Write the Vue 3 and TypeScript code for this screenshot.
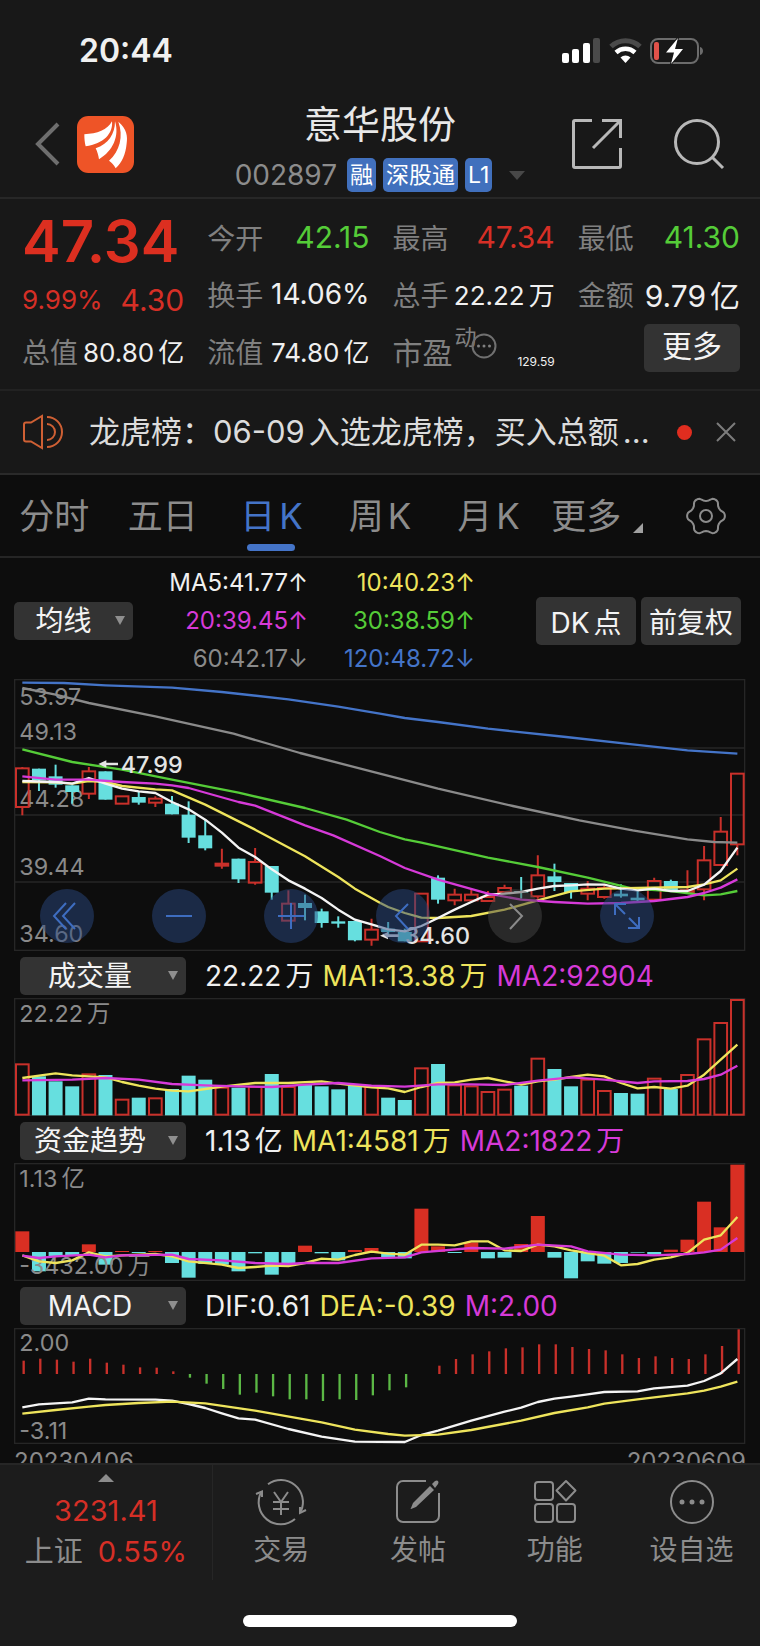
<script setup lang="ts">
import { ref } from 'vue'

type Point = [number, number]
type Candle = [kind: 'u' | 'd', high: number, top: number, bottom: number, low: number]
interface Line { color: string; points: string }

/* Chart panels share one horizontal scale: three units per pixel at full width. */
const X0 = 25
const STEP = 50
const x = (i: number): number => X0 + i * STEP * 0.9977
const line = (color: string, pts: Point[]): Line => ({
  color,
  points: pts.map(([i, y]) => `${x(i).toFixed(1)},${y}`).join(' '),
})

const WHITE = '#f4f4f4'
const YELLOW = '#eee45c'
const PINK = '#d63ad8'
const GREEN = '#55cc38'
const GRAY = '#8a8a8a'
const BLUE = '#4474c8'

const tabs = ['分时', '五日', '日K', '周K', '月K']
const activeTab = ref('日K')
const average = ref('均线')
const panelA = ref('成交量')
const panelB = ref('资金趋势')
const panelC = ref('MACD')

const averages = [
  { text: 'MA5:41.77↑', tone: 'white' },
  { text: '10:40.23↑', tone: 'yellow' },
  { text: '20:39.45↑', tone: 'pink' },
  { text: '30:38.59↑', tone: 'green' },
  { text: '60:42.17↓', tone: 'gray' },
  { text: '120:48.72↓', tone: 'blue' },
]

const priceLabels: { text: string; y: number }[] = [
  { text: '53.97', y: 95 },
  { text: '49.13', y: 198 },
  { text: '44.28', y: 400 },
  { text: '39.44', y: 603 },
  { text: '34.60', y: 805 },
]

const candles: Candle[] = [
  ['u', 280, 284, 400, 425], ['d', 285, 285, 320, 352], ['d', 273, 308, 333, 342], ['d', 335, 335, 355, 390],
  ['u', 280, 293, 360, 376], ['d', 293, 293, 378, 378], ['u', 368, 368, 390, 390], ['d', 352, 370, 387, 393],
  ['u', 368, 375, 387, 400], ['d', 367, 390, 422, 422], ['d', 383, 423, 492, 508], ['d', 437, 485, 524, 530],
  ['u', 525, 570, 576, 585], ['d', 555, 555, 617, 628], ['u', 523, 565, 627, 633], ['d', 577, 577, 657, 678],
  ['u', 650, 690, 741, 741], ['d', 663, 688, 703, 740], ['d', 705, 713, 748, 762], ['d', 728, 743, 750, 762],
  ['d', 742, 742, 800, 803], ['u', 735, 768, 798, 816], ['d', 745, 765, 775, 790], ['d', 765, 775, 803, 803],
  ['u', 658, 660, 803, 803], ['d', 605, 612, 678, 690], ['u', 645, 663, 680, 695], ['u', 645, 663, 680, 683],
  ['u', 652, 670, 682, 682], ['u', 633, 643, 655, 658], ['d', 610, 652, 657, 675], ['u', 545, 605, 668, 675],
  ['d', 570, 608, 625, 652], ['d', 628, 628, 655, 675], ['u', 622, 645, 660, 680], ['u', 635, 643, 670, 675],
  ['d', 632, 660, 668, 672], ['d', 648, 672, 680, 685], ['u', 612, 622, 678, 682], ['d', 618, 622, 652, 655],
  ['u', 590, 650, 655, 660], ['u', 517, 560, 647, 680], ['u', 430, 474, 574, 574], ['u', 300, 300, 512, 545],
]

const priceLines: Line[] = [
  line(BLUE, [[0, 27], [2.5, 28], [5, 35], [9, 42], [12, 55], [16, 77], [19, 99], [21.5, 120], [23, 133], [25, 145], [28, 165], [32.7, 190], [36.7, 212], [40, 230], [43, 240]]),
  line(GRAY, [[0, 43], [2, 63], [4, 88], [8, 128], [12.7, 180], [16.7, 238], [21.5, 300], [25, 345], [29.5, 397], [33.5, 440], [36.7, 470], [40, 497], [41.6, 505], [43, 507]]),
  line(GREEN, [[0, 227], [3, 265], [6, 288], [9, 318], [13, 357], [17, 403], [19.5, 438], [21.5, 475], [23, 497], [24, 507], [28, 552], [31, 580], [34, 612], [36.7, 645], [39, 652], [41, 665], [42, 662], [43, 652]]),
  line(YELLOW, [[0, 325], [2, 326], [3, 330], [4, 322], [5, 325], [6, 337], [8, 347], [9, 350], [11, 393], [14, 468], [17, 548], [19, 610], [20, 645], [21.5, 687], [22, 700], [23, 718], [24, 732], [25, 733], [27, 727], [29, 708], [31, 680], [33, 653], [35, 645], [37, 643], [40, 640], [41, 632], [42, 620], [43, 585]]),
  line(WHITE, [[0, 322], [2, 325], [3, 330], [4, 313], [5, 330], [6, 345], [7, 353], [8, 358], [9, 385], [10, 407], [11, 438], [12, 477], [13, 522], [14, 550], [15, 587], [16, 620], [17, 645], [18, 673], [19, 708], [20, 738], [21, 752], [22, 767], [23, 773], [24, 757], [25, 733], [26, 708], [27, 685], [28, 663], [29, 660], [30, 655], [31, 645], [32, 637], [33, 635], [34, 632], [35, 633], [36, 645], [37, 650], [38, 645], [39, 652], [40, 652], [41, 633], [42, 592], [43, 522]]),
  line(PINK, [[0, 308], [2, 318], [4, 318], [6, 325], [8, 330], [9, 335], [10, 343], [13, 385], [14, 396], [17, 455], [18.7, 485], [21.5, 547], [23, 583], [25, 618], [28, 660], [30, 678], [32, 685], [34, 690], [36, 688], [38, 682], [40, 670], [41, 658], [42, 642], [43, 617]]),
]

const volumes: number[] = [
  222, 260, 275, 290, 252, 256, 328, 324, 324, 298, 258, 270, 292, 294, 290, 253, 290, 283, 290, 299, 288, 290,
  324, 331, 234, 223, 285, 288, 305, 298, 288, 205, 238, 290, 268, 302, 310, 312, 265, 298, 254, 147, 98, 29,
]
const volumeLines: Line[] = [
  line(YELLOW, [[0, 265], [1, 258], [2, 251], [3, 257], [5, 263], [6, 277], [7, 288], [8, 297], [9, 303], [10, 305], [11, 298], [12, 291], [14, 280], [16, 280], [18, 275], [19, 282], [21, 293], [22, 296], [23, 307], [24, 292], [25, 280], [26, 278], [27, 270], [28, 265], [29, 275], [30, 285], [31, 275], [32, 270], [33, 262], [34, 255], [35, 260], [36, 280], [37, 296], [38, 292], [39, 297], [40, 288], [41, 255], [42, 210], [43, 165]]),
  line(PINK, [[0, 272], [3, 270], [5, 265], [7, 270], [9, 283], [11, 287], [13, 290], [15, 292], [17, 285], [19, 280], [21, 288], [23, 291], [25, 284], [27, 284], [29, 286], [31, 273], [33, 263], [35, 270], [37, 280], [38, 275], [40, 274], [41, 268], [42, 255], [43, 228]]),
]

const FUND_ZERO = 787
const funds: number[] = [
  725, 845, 800, 797, 764, 825, 784, 790, 784, 820, 864, 823, 825, 845, 791, 855, 820, 768, 791, 812, 781, 775,
  805, 806, 657, 770, 790, 758, 806, 804, 763, 679, 804, 866, 815, 822, 820, 789, 795, 780, 750, 636, 713, 525,
]
const fundLines: Line[] = [
  line(YELLOW, [[0, 797], [1, 815], [2, 820], [3, 812], [4, 788], [5, 800], [6, 797], [8, 793], [9, 800], [10, 815], [12, 825], [13, 835], [14, 832], [15, 828], [16, 829], [17, 820], [18, 807], [19, 810], [20, 796], [21, 786], [22, 792], [23, 795], [24, 765], [25, 765], [26, 767], [27, 755], [28, 755], [29, 782], [30, 784], [31, 765], [32, 770], [33, 782], [34, 790], [35, 798], [36, 827], [37, 823], [38, 810], [39, 803], [40, 790], [41, 750], [42, 737], [43, 682]]),
  line(PINK, [[0, 798], [1, 805], [2, 800], [4, 795], [5, 803], [6, 797], [9, 795], [10, 808], [12, 812], [14, 820], [16, 823], [17, 820], [19, 820], [21, 806], [23, 803], [24, 788], [27, 775], [29, 777], [31, 765], [33, 770], [34, 785], [36, 795], [38, 797], [40, 793], [41, 788], [42, 780], [43, 745]]),
]

const MACD_ZERO = 265
const macd: number[] = [
  225, 219, 222, 228, 219, 231, 237, 245, 246, 257, 276, 294, 310, 327, 321, 332, 341, 341, 346, 341, 343, 329,
  314, 305, 265, 240, 220, 206, 197, 188, 185, 176, 176, 184, 190, 194, 206, 217, 212, 217, 220, 206, 181, 131,
]
const macdLines: Line[] = [
  line(WHITE, [[0, 365], [1, 356], [3, 350], [4, 339], [5, 341], [8, 342], [9, 345], [10, 355], [11, 367], [12, 383], [13, 398], [14, 402], [16, 430], [18, 453], [20, 468], [23, 469], [24, 448], [25, 435], [27, 405], [29, 378], [30, 366], [31, 349], [32, 339], [33, 333], [34, 326], [35, 319], [37, 317], [38, 308], [40, 300], [41, 286], [42, 263], [43, 220]]),
  line(YELLOW, [[0, 384], [2, 373], [4, 363], [5, 358], [7, 352], [9, 348], [11, 353], [14, 375], [18, 410], [20, 432], [22, 445], [23, 450], [25, 447], [27, 433], [30, 405], [32, 382], [34, 365], [35, 354], [37, 341], [40, 323], [41, 315], [42, 303], [43, 288]]),
]

/* Six-lobed outline of the settings gear. */
const gear: string = Array.from({ length: 72 }, (_, k) => {
  const a = (k * Math.PI) / 36
  const c = Math.cos(6 * a)
  const r = 17 + 1.9 * Math.sign(c) * Math.pow(Math.abs(c), 0.6)
  return `${(20 + r * Math.cos(a)).toFixed(2)},${(20 + r * Math.sin(a)).toFixed(2)}`
}).join(' ')
</script>

<template>
  <div class="app">
    <div class="status">
      <time class="clock">20:44</time>
      <div class="signals">
        <svg class="bars" viewBox="0 0 39 26" aria-hidden="true">
          <rect x="0" y="15" width="7" height="10" rx="2" fill="#fff" />
          <rect x="10" y="11" width="7" height="14" rx="2" fill="#fff" />
          <rect x="21" y="5" width="7" height="20" rx="2" fill="#fff" />
          <rect x="31" y="0" width="7" height="25" rx="2" fill="#4a4a4a" />
        </svg>
        <svg class="wifi" viewBox="0 0 33 26" fill="none" aria-hidden="true">
          <path d="M2 8.5a21 21 0 0 1 29 0" stroke="#4a4a4a" stroke-width="5" />
          <path d="M7 14.5a14 14 0 0 1 19 0" stroke="#fff" stroke-width="4.5" />
          <path d="M11.5 19.5a7.5 7.5 0 0 1 10 0L16.500 25z" fill="#fff" />
        </svg>
        <svg class="battery" viewBox="0 0 54 28" fill="none" aria-hidden="true">
          <rect x="1" y="2" width="47" height="24" rx="7" stroke="#6c6c6c" stroke-width="2" />
          <path d="M50 10c4 1 4 7 0 8z" fill="#6c6c6c" />
          <rect x="4" y="5" width="5" height="18" rx="2" fill="#e0524a" />
          <path d="M28 1 16 15.500h8L21 27l12-15h-8z" fill="#fff" stroke="#181818" stroke-width="2" paint-order="stroke" />
        </svg>
      </div>
    </div>

    <header class="header">
      <div class="side">
        <button class="plain" aria-label="返回">
          <svg class="back" viewBox="0 0 26 44" fill="none"><path d="M23 2 3 22l20 20" stroke="#6e6e6e" stroke-width="4" /></svg>
        </button>
        <svg class="logo" viewBox="0 0 171 171" aria-hidden="true">
          <rect width="171" height="171" rx="34" fill="#ee5427" />
          <g fill="#fff">
            <path d="M22 55C60 53 92 42 105 16 109 52 80 84 26 91 23 80 22 68 22 55z" />
            <path d="M114 16C128 60 108 105 66 130 64 118 61 107 56 97 94 84 114 55 114 16z" />
            <path d="M124 17C150 38 152 62 149 82 146 115 135 140 116 157 111 147 104 140 96 134 128 106 140 60 124 17z" />
          </g>
        </svg>
      </div>
      <div class="heading">
        <h1>意华股份</h1>
        <div class="code">
          <span class="digits">002897</span>
          <span class="badge">融</span>
          <span class="badge">深股通</span>
          <span class="badge">L1</span>
          <svg class="caret" viewBox="0 0 16 9" aria-hidden="true"><path d="M0 0h16L8 9z" fill="#484848" /></svg>
        </div>
      </div>
      <div class="side end">
        <button class="plain" aria-label="分享">
          <svg class="tool" viewBox="0 0 52 52" fill="none" stroke="#b8b8b8" stroke-width="3">
            <path d="M21 2.500H4a1.500 1.500 0 0 0-1.500 1.500V48a1.500 1.500 0 0 0 1.500 1.500H48a1.500 1.500 0 0 0 1.500-1.500V30" />
            <path d="M31 2.500h18.500V20M22 30 49 3" />
          </svg>
        </button>
        <button class="plain" aria-label="搜索">
          <svg class="tool" viewBox="0 0 52 52" fill="none" stroke="#b8b8b8" stroke-width="3">
            <circle cx="24" cy="24" r="21.500" /><path d="m39 39 11 11" />
          </svg>
        </button>
      </div>
    </header>

    <section class="quote">
      <div class="price">47.34</div>
      <div class="cell"><span class="label">今开</span><span class="val big green">42.15</span></div>
      <div class="cell"><span class="label">最高</span><span class="val big red">47.34</span></div>
      <div class="cell"><span class="label">最低</span><span class="val big green">41.30</span></div>

      <div class="cell change red"><span class="val small">9.99%</span><span class="val big">4.30</span></div>
      <div class="cell"><span class="label">换手</span><span class="val mid">14.06%</span></div>
      <div class="cell"><span class="label">总手</span><span class="val small">22.22<i>万</i></span></div>
      <div class="cell"><span class="label">金额</span><span class="val big">9.79<i>亿</i></span></div>

      <div class="cell"><span class="label">总值</span><span class="val small">80.80<i>亿</i></span></div>
      <div class="cell"><span class="label">流值</span><span class="val small">74.80<i>亿</i></span></div>
      <div class="cell">
        <span class="label pe">市盈
          <sup>动</sup>
          <svg class="info" viewBox="0 0 26 26" fill="none" aria-hidden="true">
            <circle cx="13" cy="13" r="11.500" stroke="#707070" stroke-width="2" />
            <g fill="#808080"><circle cx="7.500" cy="13" r="1.500" /><circle cx="13" cy="13" r="1.500" /><circle cx="18.500" cy="13" r="1.500" /></g>
          </svg>
        </span>
        <span class="val tiny">129.59</span>
      </div>
      <div class="cell end"><button class="chip more">更多</button></div>
    </section>

    <section class="notice">
      <svg class="speaker" viewBox="0 0 42 36" fill="none" stroke="#cf6034" stroke-width="2" aria-hidden="true">
        <path d="M2 10.500q0-2 2-2h5L20 2v32L9 27.500H4q-2 0-2-2z" />
        <path d="M25 10a8 8 0 0 1 0 16M25 3a15 15 0 0 1 0 30" />
      </svg>
      <p>龙虎榜：06-09<i>入</i>选龙虎榜，买入总额<i>...</i></p>
      <span class="dot"></span>
      <button class="plain" aria-label="关闭">
        <svg class="close" viewBox="0 0 20 20" stroke="#7c7c7c" stroke-width="2"><path d="m1 1 18 18M19 1 1 19" /></svg>
      </button>
    </section>

    <main class="charts">
      <nav class="tabs">
        <button v-for="tab in tabs" :key="tab" class="tab" :class="{ active: tab === activeTab }" @click="activeTab = tab">
          <span>{{ tab.replace('K', '') }}</span><i v-if="tab.includes('K')">K</i>
        </button>
        <button class="tab">更多<svg class="corner" viewBox="0 0 10 10" aria-hidden="true"><path d="M10 0v10H0z" fill="#a0a0a0" /></svg></button>
        <button class="tab" aria-label="设置">
          <svg class="gear" viewBox="0 0 40 40" fill="none" stroke="#8c8c8c" stroke-width="2" stroke-linejoin="round">
            <polygon :points="gear" /><circle cx="20" cy="20" r="6" />
          </svg>
        </button>
      </nav>

      <div class="averages">
        <label class="drop short">
          <select v-model="average" aria-label="主图指标"><option>均线</option><option>BOLL</option></select>
        </label>
        <div class="values">
          <span v-for="item in averages" :key="item.text" :class="item.tone">{{ item.text }}</span>
        </div>
        <div class="chips"><button class="chip">DK<i>点</i></button><button class="chip">前复权</button></div>
      </div>

      <div class="stage">
        <svg class="panel" viewBox="0 16 2196 816" role="img" aria-label="日K线图">
          <g class="frame"><rect x="2" y="18" width="2190" height="812" /><path d="M2 223H2192M2 424H2192M2 625H2192" /></g>
          <text v-for="label in priceLabels" :key="label.text" class="axis" x="16" :y="label.y">{{ label.text }}</text>
          <g v-for="(c, i) in candles" :key="i">
            <template v-if="c[0] === 'u'">
              <path class="hollow" :d="`M${x(i)} ${c[1]}V${c[2]}M${x(i)} ${c[3]}V${c[4]}`" />
              <rect class="hollow" :x="x(i) - 19" :y="c[2]" width="38" :height="c[3] - c[2]" />
            </template>
            <template v-else>
              <path class="wick" :d="`M${x(i)} ${c[1]}V${c[4]}`" />
              <rect class="solid" :x="x(i) - 21" :y="c[2]" width="42" :height="c[3] - c[2]" />
            </template>
          </g>
          <polyline v-for="l in priceLines" :key="l.color" class="curve" :points="l.points" :stroke="l.color" />
          <g class="mark">
            <path d="M253 271 277 260V267H312V275H277V282z" /><text x="320" y="297">47.99</text>
            <path d="M1098 786 1122 775V782H1154V790H1122V797z" /><text x="1172" y="810">34.60</text>
          </g>
        </svg>
        <div class="controls">
          <button aria-label="最左"><svg viewBox="0 0 54 54"><path d="M26 14 14 27l12 13M35 14 23 27l12 13" /></svg></button>
          <button aria-label="缩小"><svg viewBox="0 0 54 54"><path d="M14 27h26" /></svg></button>
          <button aria-label="放大"><svg viewBox="0 0 54 54"><path d="M14 27h26M27 14v26" /></svg></button>
          <button aria-label="左移"><svg viewBox="0 0 54 54"><path d="M32 15 20 27l12 13" /></svg></button>
          <button class="dim" aria-label="右移"><svg viewBox="0 0 54 54"><path d="m22 15 12 12-12 13" /></svg></button>
          <button aria-label="全屏"><svg viewBox="0 0 54 54"><path d="M15 26V15h11M15 15l10 10M39 28v11H28M39 39 29 29" /></svg></button>
        </div>
      </div>

      <div class="indicator">
        <label class="drop"><select v-model="panelA" aria-label="副图一"><option>成交量</option><option>MACD</option></select></label>
        <p><span>22.22<i>万</i></span><span class="yellow">MA1:13.38<i>万</i></span><span class="pink">MA2:92904</span></p>
      </div>
      <svg class="panel" viewBox="0 25 2196 354" role="img" aria-label="成交量图">
        <g class="frame"><rect x="2" y="27" width="2190" height="350" /></g>
        <text class="axis" x="16" y="98">22.22<tspan dx="12">万</tspan></text>
        <template v-for="(v, i) in volumes" :key="i">
          <rect v-if="candles[i][0] === 'u'" class="hollow" :x="x(i) - 19" :y="v + 2" width="38" :height="373 - v" />
          <rect v-else class="solid" :x="x(i) - 21" :y="v" width="42" :height="377 - v" />
        </template>
        <polyline v-for="l in volumeLines" :key="l.color" class="curve" :points="l.points" :stroke="l.color" />
      </svg>

      <div class="indicator">
        <label class="drop"><select v-model="panelB" aria-label="副图二"><option>资金趋势</option><option>MACD</option></select></label>
        <p><span>1.13<i>亿</i></span><span class="yellow">MA1:4581<i>万</i></span><span class="pink">MA2:1822<i>万</i></span></p>
      </div>
      <svg class="panel" viewBox="0 520 2196 354" role="img" aria-label="资金趋势图">
        <g class="frame"><rect x="2" y="522" width="2190" height="350" /></g>
        <text class="axis" x="16" y="591">1.13<tspan dx="12">亿</tspan></text>
        <rect
          v-for="(v, i) in funds" :key="i" :class="v < FUND_ZERO ? 'gain' : 'solid'"
          :x="x(i) - 21" :y="Math.min(v, FUND_ZERO)" width="42" :height="Math.abs(v - FUND_ZERO)"
        />
        <text class="axis" x="16" y="854">-3432.00<tspan dx="12">万</tspan></text>
        <polyline v-for="l in fundLines" :key="l.color" class="curve" :points="l.points" :stroke="l.color" />
      </svg>

      <div class="indicator">
        <label class="drop"><select v-model="panelC" aria-label="副图三"><option>MACD</option><option>KDJ</option></select></label>
        <p><span>DIF:0.61</span><span class="yellow">DEA:-0.39</span><span class="pink">M:2.00</span></p>
      </div>
      <svg class="panel" viewBox="0 127 2196 348" role="img" aria-label="MACD图">
        <g class="frame"><rect x="2" y="129" width="2190" height="344" /></g>
        <text class="axis" x="16" y="197">2.00</text>
        <text class="axis" x="16" y="461">-3.11</text>
        <path
          v-for="(v, i) in macd" :key="i" :class="v < MACD_ZERO ? 'rise' : 'fall'"
          :d="`M${x(i) + 4} ${MACD_ZERO}V${v}`"
        />
        <polyline v-for="l in macdLines" :key="l.color" class="curve" :points="l.points" :stroke="l.color" />
      </svg>
      <div class="dates"><time>20230406</time><time>20230609</time></div>
    </main>

    <footer class="footer">
      <div class="dock">
        <button class="index">
          <svg class="up" viewBox="0 0 16 8" aria-hidden="true"><path d="M0 8 8 0l8 8z" fill="#8c8c8c" /></svg>
          <span class="red">3231.41</span>
          <span>上证<b class="red">0.55%</b></span>
        </button>
        <button class="action">
          <svg viewBox="0 0 52 48" fill="none" stroke="#8c8c8c" stroke-width="2">
            <path d="M13 6.200A22 22 0 0 1 46 33M40 41A22 22 0 0 1 6.400 13.700" />
            <path d="M51 32 45 35V29M1 16 7 13.500V19" />
            <path d="m19 14 7 10 7-10M26 24v13M18 24h16M18 31h16" />
          </svg>
          <span>交易</span>
        </button>
        <button class="action">
          <svg viewBox="0 0 52 48" fill="none" stroke="#8c8c8c" stroke-width="2">
            <path d="M34 3H11a6 6 0 0 0-6 6V38a6 6 0 0 0 6 6H41a6 6 0 0 0 6-6V15" />
            <g fill="#8c8c8c" stroke="none"><path d="m38 8 4 4L24 29l-5 2q-1 0 0-1l2-5z" /><path d="m40 6 3-3q2-1 3 0t0 3l-3 4z" /></g>
          </svg>
          <span>发帖</span>
        </button>
        <button class="action">
          <svg viewBox="0 0 52 48" fill="none" stroke="#8c8c8c" stroke-width="2" stroke-linejoin="round">
            <rect x="6" y="4" width="18" height="18" rx="3" /><rect x="6" y="26" width="18" height="18" rx="3" />
            <rect x="28" y="26" width="18" height="18" rx="3" /><path d="M37 3 46.500 12.500 37 22.500 27.500 12.500z" />
          </svg>
          <span>功能</span>
        </button>
        <button class="action">
          <svg viewBox="0 0 52 48" fill="none" stroke="#8c8c8c" stroke-width="2">
            <circle cx="26" cy="24" r="21" />
            <g fill="#8c8c8c" stroke="none"><circle cx="16" cy="24" r="2.500" /><circle cx="26" cy="24" r="2.500" /><circle cx="36" cy="24" r="2.500" /></g>
          </svg>
          <span>设自选</span>
        </button>
      </div>
      <div class="home"></div>
    </footer>
  </div>
</template>

<style>
body { background: #1c1c1c; }
</style>

<style scoped>
.app {
  color: #f0f0f0;
  background: #181818;
  font-family: Inter, "Noto Sans CJK SC", sans-serif;
  font-weight: 400;
  -webkit-font-smoothing: antialiased;
}
.app * { box-sizing: border-box; }
button, select { font: inherit; color: inherit; border: 0; background: none; padding: 0; margin: 0; }
svg { display: block; }
h1, p { margin: 0; font-weight: 400; }
i { font-style: normal; margin-left: 4px; }
b { font-weight: 400; }
.red { color: #d62f26; }
.green { color: #55cc38; }
.yellow { color: #eee45c; }
.pink { color: #d63ad8; }
.gray { color: #8a8a8a; }
.blue { color: #4474c8; }

.status { display: flex; justify-content: space-between; align-items: center; height: 101px; padding: 0 56px 0 79px; }
.clock { font-size: 32px; font-weight: 600; }
.signals { display: flex; align-items: center; gap: 8px; }
.bars { width: 39px; height: 26px; }
.wifi { width: 33px; height: 26px; }
.battery { width: 54px; height: 28px; }

.header { display: grid; grid-template-columns: 1fr auto 1fr; height: 98px; padding: 0 35px; border-bottom: 2px solid #272727; }
.side { display: flex; align-items: center; gap: 16px; padding-bottom: 10px; }
.side.end { justify-content: flex-end; gap: 50px; }
.back { width: 26px; height: 44px; }
.logo { width: 57px; height: 57px; }
.tool { width: 52px; height: 52px; }
.heading { display: flex; flex-direction: column; align-items: center; }
h1 { font-size: 38px; line-height: 46px; color: #e8e8e8; }
.code { display: flex; align-items: center; gap: 7px; height: 40px; margin-top: 8px; }
.digits { font-size: 28px; color: #8c8c8c; margin-right: 3px; }
.badge { height: 34px; padding: 0 3px; border-radius: 5px; background: #4170bd; color: #fff; font-size: 23px; line-height: 34px; }
.caret { width: 16px; height: 9px; margin-left: 10px; }

.quote {
  display: grid; grid-template-columns: repeat(4, minmax(0, 1fr)); grid-auto-rows: 57px; column-gap: 23px;
  padding: 9px 20px 10px 22px; border-bottom: 2px solid #222;
}
.price { font-size: 58px; font-weight: 600; line-height: 66px; color: #dc2f20; }
.cell { display: flex; justify-content: space-between; align-items: center; white-space: nowrap; }
.cell.end { justify-content: flex-end; }
.cell.change { padding-top: 12px; }
.label { color: #808080; font-size: 28px; }
.big { font-size: 30px; }
.mid { font-size: 28px; }
.small { font-size: 26px; }
.tiny { font-size: 12px; align-self: flex-end; padding-bottom: 10px; }
.pe { position: relative; font-size: 30px; }
.pe sup { position: absolute; left: 62px; top: -8px; font-size: 22px; line-height: 32px; }
.info { position: absolute; left: 78px; top: 4px; width: 26px; height: 26px; }
.chip { height: 48px; padding: 0 7px; border-radius: 5px; background: #333; color: #f4f4f4; font-size: 28px; white-space: nowrap; }
.more { width: 96px; font-size: 30px; line-height: 44px; padding-bottom: 4px; margin-bottom: 6px; }

.notice { display: flex; align-items: center; height: 84px; padding: 0 24px 0 22px; border-bottom: 2px solid #2a2a2a; }
.speaker { width: 42px; height: 36px; flex: none; }
.notice p { flex: 1; min-width: 0; margin-left: 25px; font-size: 31px; line-height: 44px; color: #dcdcdc; white-space: nowrap; overflow: hidden; }
.dot { width: 15px; height: 15px; border-radius: 50%; background: #e02d1f; margin-right: 24px; }
.close { width: 20px; height: 20px; }

.charts { background: #0d0d0d; }
.tabs { display: grid; grid-template-columns: repeat(7, 1fr); height: 83px; border-bottom: 2px solid #252525; }
.tab { position: relative; display: flex; justify-content: center; align-items: center; font-size: 35px; line-height: 48px; color: #8c8c8c; }
.tab.active { color: #4474c8; }
.tab.active::after { content: ""; position: absolute; left: 50%; bottom: 5px; width: 48px; height: 7px; border-radius: 4px; background: #4474c8; transform: translateX(-50%); }
.corner { width: 10px; height: 10px; margin: 24px 0 0 12px; }
.gear { width: 40px; height: 40px; }

.averages { display: flex; align-items: center; height: 121px; padding: 4px 19px 0 14px; }
.drop { position: relative; display: block; width: 166px; height: 38px; flex: none; }
.drop select { appearance: none; width: 100%; height: 38px; padding-right: 26px; border-radius: 5px; background: #333; color: #f4f4f4; font-size: 28px; line-height: 38px; text-align: center; text-align-last: center; }
.drop::after { content: ""; position: absolute; right: 8px; top: 14px; border: 5px solid transparent; border-top: 9px solid #8f8f8f; border-bottom: 0; pointer-events: none; }
.drop.short { width: 119px; }
.drop.short select { padding-right: 20px; }
.values { display: grid; grid-template-columns: 175px 167px; justify-items: end; font-size: 24px; line-height: 38px; }
.chips { display: flex; gap: 5px; margin-left: auto; }
.chips .chip { min-width: 100px; }

.stage { position: relative; }
.panel { width: calc(100% - 28px); height: auto; margin: 0 14px; }
.frame { fill: none; stroke: #262626; stroke-width: 4; }
.axis { fill: #8a8a8a; font-size: 70px; }
.hollow { fill: none; stroke: #c9302a; stroke-width: 6; }
.wick { stroke: #66dfdf; stroke-width: 6; }
.solid { fill: #66dfdf; }
.gain { fill: #d92f23; }
.rise { stroke: #c9302a; stroke-width: 7; }
.fall { stroke: #5bb845; stroke-width: 7; }
.curve { fill: none; stroke-width: 7; stroke-linejoin: round; }
.mark { fill: #e4e4e4; font-size: 70px; font-weight: 500; }
.controls { position: absolute; left: 40px; right: 14%; bottom: 8px; display: flex; justify-content: space-between; }
.controls button { width: 54px; height: 54px; border-radius: 50%; background: rgba(42, 72, 128, 0.5); }
.controls svg { fill: none; stroke: #3e6dc0; stroke-width: 2; }
.controls .dim { background: rgba(70, 70, 70, 0.5); }
.controls .dim svg { stroke: #8a8a8a; }

.indicator { display: flex; align-items: center; height: 47px; padding: 2px 0 0 20px; gap: 19px; font-size: 28px; line-height: 38px; white-space: nowrap; }
.indicator p { display: flex; align-items: baseline; gap: 9px; }
.dates { display: flex; justify-content: space-between; height: 19px; padding: 2px 14px 0; overflow: hidden; color: #8a8a8a; font-size: 24px; line-height: 32px; }

.footer { background: #1c1c1c; border-top: 2px solid #262626; height: 183px; }
.dock { display: grid; grid-template-columns: 28% repeat(4, 1fr); height: 115px; }
.index { display: flex; flex-direction: column; align-items: center; padding-top: 9px; border-right: 1px solid #262626; font-size: 29px; line-height: 41px; color: #8c8c8c; }
.index .up { width: 16px; height: 8px; margin-bottom: 8px; }
.index b { margin-left: 15px; }
.action { display: flex; flex-direction: column; align-items: center; padding-top: 13px; font-size: 28px; line-height: 40px; color: #8c8c8c; }
.action svg { width: 52px; height: 48px; margin-bottom: 4px; }
.home { width: 36%; height: 12px; margin: 35px auto 0; border-radius: 6px; background: #fff; }
</style>
